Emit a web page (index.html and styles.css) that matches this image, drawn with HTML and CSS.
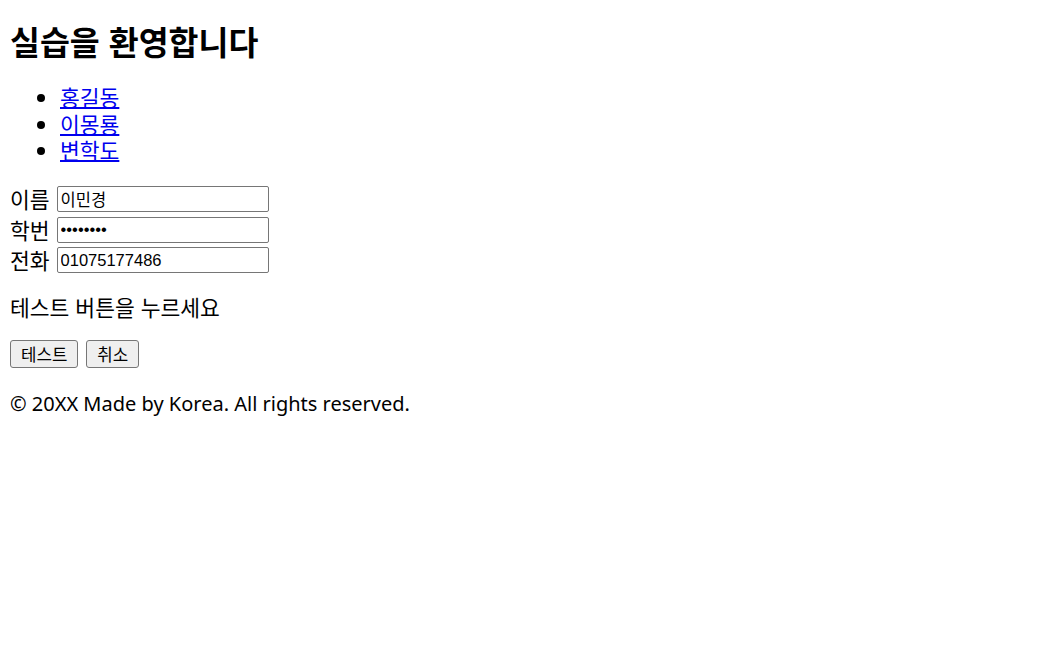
FILE: index.html
```html
<!DOCTYPE html>
<html lang="ko">
<head>
<meta charset="utf-8">
<title>실습</title>
<link rel="stylesheet" href="styles.css">
</head>
<body>
<h1 class="title">실습을 환영합니다</h1>
<ul class="names">
  <li><a href="#">홍길동</a></li>
  <li><a href="#">이몽룡</a></li>
  <li><a href="#">변학도</a></li>
</ul>
<form class="info">
  <div class="row"><label class="lbl">이름</label> <input class="field" type="text" value="이민경"></div>
  <div class="row"><label class="lbl">학번</label> <input class="field" type="password" value="12345678"></div>
  <div class="row"><label class="lbl">전화</label> <input class="field" type="text" value="01075177486"></div>
</form>
<p class="msg">테스트 버튼을 누르세요</p>
<div class="buttons">
  <button class="btn" type="button">테스트</button>
  <button class="btn" type="button">취소</button>
</div>
<p class="foot">© 20XX Made by Korea. All rights reserved.</p>
</body>
</html>
```

FILE: styles.css
```css
body {
  margin: 8px;
  padding-left: 2px;
  font-family: "Noto Sans CJK KR", "Noto Sans", sans-serif;
  font-size: 21.5px;
  line-height: 26.6px;
  color: #000;
  background: #fff;
}
.title {
  font-size: 32.5px;
  line-height: 42.5px;
  font-weight: 700;
  margin: 12.4px 0 21.4px;
}
.names {
  margin: 20px 0;
  padding-left: 50px;
}
.names a {
  color: #0000ee;
  text-decoration-thickness: 2px;
}
.info {
  margin: 0;
}
.row {
  height: 30.5px;
  display: flex;
  align-items: center;
  gap: 7px;
}
.lbl {
  display: inline-block;
}
.field {
  width: 212px;
  height: 26px;
  box-sizing: border-box;
  border: 1px solid #767676;
  border-radius: 2px;
  padding: 1px 3px;
  font-family: "Liberation Sans", Arial, "Noto Sans CJK KR", sans-serif;
  font-size: 16.5px;
  color: #000;
}
.msg {
  margin: 18px 0 20px;
}
.buttons {
  display: flex;
  gap: 8px;
  height: 28px;
}
.btn {
  height: 28px;
  box-sizing: border-box;
  padding: 0 10px;
  border: 1px solid #767676;
  border-radius: 3px;
  background: #efefef;
  font-family: "Noto Sans CJK KR", sans-serif;
  font-size: 16.8px;
  line-height: 24px;
  color: #000;
}
.foot {
  margin: 23px 0;
  font-family: "Noto Sans", "Noto Sans CJK KR", sans-serif;
  font-size: 20px;
}
```
